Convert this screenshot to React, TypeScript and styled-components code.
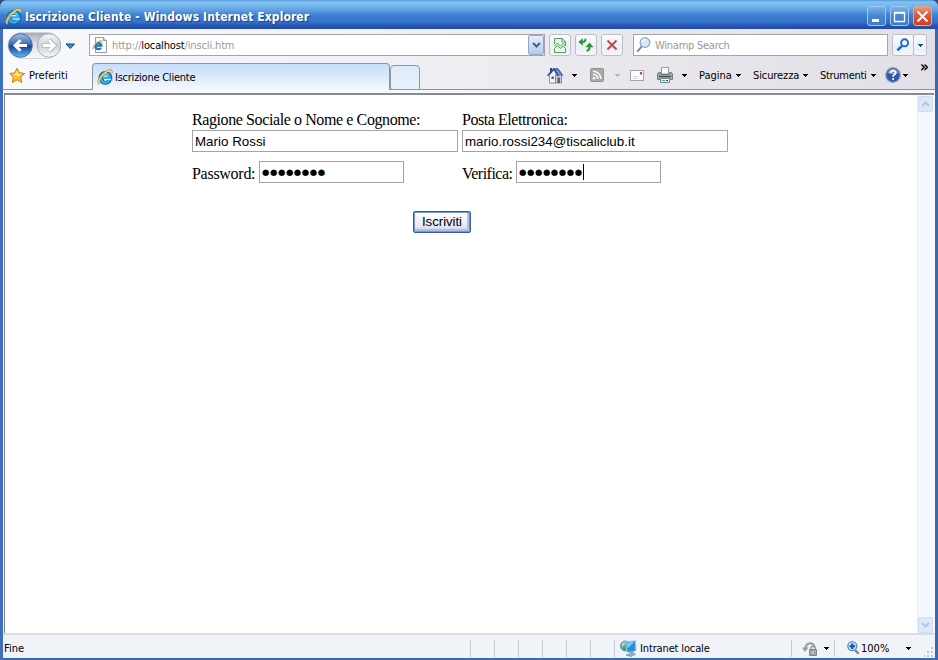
import React from "react";
import styled, {createGlobalStyle} from "styled-components";

const GlobalStyle = createGlobalStyle`
  * {
    box-sizing: border-box;
    margin: 0;
    padding: 0;
  }

  body {
    width: 938px;
    height: 660px;
    overflow: hidden;
    background: #3a4a6c;
  }

  svg {
    display: block;
    flex: none;
  }
`

const Window = styled.div`
  width: 938px;
  height: 660px;
  display: flex;
  flex-direction: column;
  overflow: hidden;
  border-radius: 7px 7px 0 0;
  background: #4d7fd0;
  font-family: "DejaVu Sans Condensed", "DejaVu Sans", sans-serif;
  font-stretch: condensed;
  font-size: 11px;
  color: #000;
`

const TitleBar = styled.header`
  height: 29px;
  flex: none;
  display: flex;
  align-items: center;
  padding: 3px 6px 0 5px;
  background: linear-gradient(#5b95d8 0, #7fc4f2 2px, #76b9ed 5px, #5a9de0 11px, #3d7fd2 15px, #3474cb 22px, #2959b8 25px, #2149a5 29px);
`

const WindowTitle = styled.h1`
  width: 300px;
  margin: 1px 0 0 3px;
  font-size: 12px;
  line-height: 16px;
  font-weight: 700;
  letter-spacing: 0.09px;
  white-space: nowrap;
  color: #fff;
  text-shadow: 1px 1px 1px #17408f;
`

const WindowButtons = styled.div`
  display: flex;
  gap: 4px;
  margin-left: auto;
`

const WindowButton = styled.button<{ $close?: boolean }>`
  width: 19px;
  height: 20px;
  display: flex;
  align-items: center;
  justify-content: center;
  border: 1px solid ${({$close}) => $close ? '#e9a396' : '#a5c8ef'};
  border-radius: 3px;
  background: ${({$close}) => $close
      ? 'linear-gradient(#ee9a82, #d9583c 45%, #cd4020)'
      : 'linear-gradient(#79b2e7, #4587d4 50%, #3d7ccd)'};
`

const Frame = styled.div`
  flex: 1;
  min-height: 0;
  display: flex;
  flex-direction: column;
  border: solid #3a68b9;
  border-width: 0 3px 2px 3px;
  border-left-color: #3f6fbd;
  background: #f6f8fc;
`

const Chrome = styled.div`
  flex: none;
  height: 61px;
  background: linear-gradient(90deg, #f8f9fd 0, #f1f2f7 35%, #e9e8ed 65%, #e2e0e6 100%);
`

const AddressRow = styled.div`
  height: 33px;
  display: flex;
  align-items: center;
  padding: 0 0 1px 3px;
`

const HistoryArrow = styled.div`
  width: 11px;
  margin: 2px 13px 0 4px;
`

const AddressBox = styled.div`
  width: 456px;
  height: 22px;
  display: flex;
  align-items: center;
  padding-left: 2px;
  border: 1px solid #a3a5ab;
  background: #fff;
`

const Url = styled.span`
  width: 130px;
  margin: 1px 0 0 5px;
  letter-spacing: -0.14px;
  white-space: nowrap;
  color: #999;

  b {
    font-weight: 400;
    color: #000;
  }
`

const DropButton = styled.button`
  width: 16px;
  height: 20px;
  margin-left: auto;
  display: flex;
  align-items: center;
  justify-content: center;
  border: 1px solid #90a9c9;
  border-radius: 2px;
  background: linear-gradient(#e4effc, #b7cdea);
`

const ToolButton = styled.button<{ $w?: number, $ml?: number }>`
  width: ${({$w}) => $w || 22}px;
  height: 22px;
  margin-left: ${({$ml}) => $ml ?? 4}px;
  display: flex;
  align-items: center;
  justify-content: center;
  border: 1px solid #bbbfca;
  border-radius: 3px;
  background: linear-gradient(#fbfcfd, #eaf0f6 60%, #f3f6fa);
`

const SearchBox = styled.div`
  width: 255px;
  height: 22px;
  margin-left: 10px;
  display: flex;
  align-items: center;
  gap: 4px;
  padding-left: 2px;
  border: 1px solid #a3a5ab;
  background: #fff;
  color: #999;
  letter-spacing: -0.25px;

  span {
    margin-top: 1px;
  }
`

const TabRow = styled.div`
  height: 28px;
  display: flex;
  align-items: flex-end;
  border-bottom: 1px solid #8d9299;
`

const Favorites = styled.div`
  width: 89px;
  height: 28px;
  display: flex;
  align-items: center;
  gap: 3px;
  padding-left: 6px;
`

const Tab = styled.div`
  width: 298px;
  height: 27px;
  margin-bottom: -1px;
  display: flex;
  align-items: center;
  gap: 2px;
  padding-left: 4px;
  border: 1px solid #8d959f;
  border-bottom: 0;
  border-radius: 4px 4px 0 0;
  background: linear-gradient(#c6dffa, #dbe9fb 50%, #f6f9fe);
  letter-spacing: -0.24px;
`

const NewTab = styled.div`
  width: 30px;
  height: 25px;
  margin-bottom: -1px;
  border: 1px solid #8d959f;
  border-radius: 4px 4px 0 3px;
  background: linear-gradient(#dcebfb, #e8f2fc);
`

const CommandBar = styled.nav`
  flex: 1;
  height: 28px;
  display: flex;
  align-items: center;
  padding-left: 127px;
`

const Slot = styled.span<{ $w: number, $spacing?: number }>`
  flex: none;
  width: ${({$w}) => $w}px;
  letter-spacing: ${({$spacing}) => $spacing || 0}px;
  white-space: nowrap;
`

const Overflow = styled.span`
  align-self: flex-start;
  margin-top: -2px;
  font-size: 15px;
  line-height: 16px;
  font-weight: 700;
`

const Viewport = styled.main`
  flex: 1;
  min-height: 0;
  display: flex;
  margin: 3px 1px 0 1px;
  border-top: 2px solid #868b94;
  border-left: 1px solid #7a8495;
  background: #fff;
`

const Page = styled.div`
  flex: 1;
  padding: 15px 0 0 187px;
  font-family: "Liberation Serif", serif;
  font-size: 16px;
`

const FormGrid = styled.form`
  display: grid;
  grid-template-columns: 266px 266px;
  column-gap: 4px;
`

const FieldLabel = styled.label<{ $spacing: number }>`
  height: 20px;
  line-height: 20px;
  letter-spacing: ${({$spacing}) => $spacing}px;
  white-space: nowrap;
`

const InlineField = styled.div`
  height: 31px;
  display: flex;
  align-items: flex-end;

  label {
    height: 19px;
    line-height: 20px;
  }
`

const Field = styled.div<{ $w: number }>`
  width: ${({$w}) => $w}px;
  height: 22px;
  display: flex;
  align-items: center;
  padding-left: 2px;
  border: 1px solid #a3a3ad;
  font: 13.33px "Liberation Sans", sans-serif;
  letter-spacing: 0.02px;
  white-space: nowrap;
`

const Dots = styled.span`
  width: 64px;
  font: 8.5px/14px "DejaVu Sans", sans-serif;
  letter-spacing: 0.55px;
`

const Caret = styled.i`
  width: 1px;
  height: 16px;
  background: #000;
`

const SubmitButton = styled.button`
  width: 58px;
  height: 22px;
  margin: 28px 0 0 221px;
  border: 1px solid #3c5b93;
  border-radius: 2px;
  box-shadow: inset 0 0 0 1px #7298d4, inset -1px -1px 0 2px #a9c1e8;
  background: linear-gradient(#fff, #eceef6 60%, #c9d2e8);
  font: 13.33px/18px "Liberation Sans", sans-serif;
  letter-spacing: -0.08px;
`

const ScrollBar = styled.div`
  width: 17px;
  display: flex;
  flex-direction: column;
  justify-content: space-between;
  padding-top: 1px;
  border-left: 1px solid #e7edf7;
  background: #f5f9fe;
`

const ScrollButton = styled.button`
  width: 15px;
  height: 16px;
  display: flex;
  align-items: center;
  justify-content: center;
  border: 1px solid #ccdef4;
  border-radius: 2px;
  background: #dce9fa;
`

const StatusBar = styled.footer`
  flex: none;
  height: 25px;
  display: flex;
  align-items: center;
  padding: 3px 1px 0;
  border-top: 2px solid #d9dde2;
  background: #f0f3f8;
`

const StatusText = styled.span`
  width: 466px;
`

const Pane = styled.div<{ $w: number, $pad?: number }>`
  flex: none;
  width: ${({$w}) => $w}px;
  height: 17px;
  display: flex;
  align-items: center;
  padding-left: ${({$pad}) => $pad || 0}px;
  border-left: 1px solid #c9cdd3;
`

const Grip = styled.svg`
  align-self: flex-end;
  margin-left: auto;
`

const IELogo: React.FC<{ size?: number }> = ({size = 16}) => (
    <svg width={size} height={size} viewBox="0 0 16 16" fill="none">
        <path d="M13 10.6A4.9 4.9 0 1 1 13.3 8.8H5.6" stroke="#1766a8" strokeWidth="4"/>
        <path d="M12.6 10.6A4.6 4.6 0 1 1 12.9 8.8H5.6" stroke="#37a9e6" strokeWidth="2.5"/>
        <path d="M6.3 7.2h4.6M7 10.5h7" stroke="#eaf6fd" strokeWidth="1.1"/>
        <path d="M5 6.2A4.4 4.4 0 0 1 11 5.6" stroke="#a5e0fa"/>
        <path d="M2.4 14.9C-.6 13.4 3 6.7 8 3.3 12.1.5 15.6.1 14.7 4" stroke="#b98a2a" strokeWidth="1.7"/>
        <path d="M2.2 14.5C.5 12.8 4 6.9 8.4 3.6 12 1.1 14.8.7 14.5 3.6" stroke="#ffdc5e" strokeWidth="1.2"/>
    </svg>
)

const PageIcon = () => (
    <svg width="15" height="16" viewBox="0 0 15 16">
        <path d="M3.5.5h8l3 3v12h-11z" fill="#fafbfc" stroke="#9a9b9e"/>
        <path d="M11.5.5v3h3" fill="#ddd" stroke="#9a9b9e"/>
        <path d="M8.9 10.8A3.1 3.1 0 1 1 9.4 8.7H3.5" fill="none" stroke="#1674b8" strokeWidth="2.2"/>
        <path d="M1.4 12.7C0 11.2 3 6.8 6 5 8.6 3.4 10.6 3.2 10 5.6" fill="none" stroke="#e0a62c" strokeWidth="1.2"/>
    </svg>
)

const NavButtons = () => (
    <svg width="55" height="29" viewBox="0 0 55 29">
        <defs>
            <linearGradient id="shell" x1="0" y1="0" x2="0" y2="1">
                <stop offset="0" stopColor="#a6a9b0"/>
                <stop offset=".45" stopColor="#e0e2e7"/>
                <stop offset="1" stopColor="#f8f9fb"/>
            </linearGradient>
            <linearGradient id="back" x1="0" y1="0" x2="0" y2="1">
                <stop offset="0" stopColor="#a9c2e4"/>
                <stop offset=".42" stopColor="#3f72bd"/>
                <stop offset=".55" stopColor="#164899"/>
                <stop offset="1" stopColor="#5dbdf4"/>
            </linearGradient>
            <linearGradient id="forward" x1="0" y1="0" x2="0" y2="1">
                <stop offset="0" stopColor="#f8f9fa"/>
                <stop offset=".5" stopColor="#ced2da"/>
                <stop offset="1" stopColor="#f7f8fa"/>
            </linearGradient>
        </defs>
        <path d="M15 1.5h26a13 13 0 0 1 0 26H15a13 13 0 0 1 0-26z" fill="url(#shell)" stroke="#d1d4da"/>
        <circle cx="14.5" cy="14.5" r="11.8" fill="url(#back)" stroke="#4b6fa8"/>
        <path d="M9 14.5h12M14.5 9.2l-5.4 5.3 5.4 5.3" fill="none" stroke="#fff" strokeWidth="3"/>
        <circle cx="43" cy="14.5" r="11.8" fill="url(#forward)" stroke="#a4aab4"/>
        <path d="M36.5 14.5H48M43 9l5.5 5.5L43 20" fill="none" stroke="#a7adb7" strokeWidth="4.2"/>
        <path d="M37 14.5h11M43 9.2l5.3 5.3-5.3 5.3" fill="none" stroke="#fff" strokeWidth="2.8"/>
    </svg>
)

const StarIcon = () => (
    <svg width="17" height="17" viewBox="0 0 17 17">
        <path d="m8 1.2 2.2 4.6 5.5.6-4 3.7 1.2 5.4-4.8-2.7-4.8 2.8 1-5.5L.8 6.5l5.1-.7z" fill="#fdc02e" stroke="#c58818"/>
        <path d="m8 3.5 1.3 3.3 3.4.4-3 2.1-5.7-2.1 2.7-.5z" fill="#ffe68a"/>
    </svg>
)

const Triangle: React.FC<{ color?: string }> = ({color = '#000'}) => (
    <svg width="5" height="3" viewBox="0 0 5 3" shapeRendering="crispEdges">
        <path d="M0 0h5v1H4v1H3v1H2V2H1V1H0z" fill={color}/>
    </svg>
)

const Chevron: React.FC<{ up?: boolean, color?: string, width?: number }> = ({up, color = '#3d5f90', width = 2}) => (
    <svg width="9" height="6" viewBox="0 0 9 6">
        <path d={up ? 'm1 5 3.5-3.5L8 5' : 'm1 1 3.5 3.5L8 1'} fill="none" stroke={color} strokeWidth={width}/>
    </svg>
)

const CompatIcon = () => (
    <svg width="12" height="15" viewBox="0 0 12 15" fill="none" stroke="#4fa054">
        <path d="M.5 6V.5h7.8l3.2 3.2V8M8 .5V4h3.5" fill="#effaf0"/>
        <path d="m.5 8 2.8-3 3 3 2.8-2.5L11.5 8M.5 10.5l2.8-3 3 3L9 8l2.5 2.5v4H.5z"/>
    </svg>
)

const RefreshIcon = () => (
    <svg width="16" height="14" viewBox="0 0 16 14" fill="none" stroke="#2f9433" strokeWidth="2">
        <path d="M7.5.8C7.6 3.2 6.7 4 4 4"/>
        <path d="M.3 4 4.8.2v7.6z" fill="#2f9433" stroke="none"/>
        <path d="M11.5 7v2.5c0 2-1 3-3 3.2"/>
        <path d="m11.5 4.5 4 4.8h-8z" fill="#2f9433" stroke="none"/>
    </svg>
)

const SearchGlass: React.FC<{ blue?: boolean }> = ({blue}) => blue ? (
    <svg width="14" height="14" viewBox="0 0 14 14" fill="none" stroke="#2467c8">
        <circle cx="8.6" cy="4.8" r="3.5" strokeWidth="1.9" fill="#edf5fd"/>
        <path d="m6 7.8-4.6 4.6" strokeWidth="2.6"/>
    </svg>
) : (
    <svg width="15" height="16" viewBox="0 0 15 16" fill="none">
        <path d="m5.8 9.3-4.6 5.4" stroke="#8b8582" strokeWidth="2"/>
        <circle cx="9" cy="5.5" r="4.8" fill="#d7e8fa" stroke="#8ea4bd" strokeWidth="1.3"/>
        <path d="M6 5a3 3 0 0 1 3-2.5" stroke="#fff"/>
    </svg>
)

const HomeIcon = () => (
    <svg width="17" height="17" viewBox="0 0 17 17">
        <path d="M2.5 8v8H9V4.5L7 3z" fill="#f3f6fd" stroke="#8592b5"/>
        <path d="M8.5 8h6v8h-6z" fill="#c3cde4" stroke="#7d8bb0"/>
        <path d="M3 1h2.2v4L3 7z" fill="#26438c"/>
        <path d="m6.5 2.5 4-1L16 8.5l-5 .5z" fill="#6f8cc9"/>
        <path d="M.5 8.8 6.8 2l4.4 7" fill="none" stroke="#2b4790" strokeWidth="1.4"/>
        <path d="m7 2 4-.3 5 6.8" fill="none" stroke="#2b4790"/>
        <path d="M4.5 9.5h2.3V12H4.5z" fill="#3d5d9f"/>
        <path d="M10.5 10.5h2.3V16h-2.3z" fill="#6b5043"/>
    </svg>
)

const FeedIcon = () => (
    <svg width="14" height="14" viewBox="0 0 14 14" fill="none">
        <rect x=".5" y=".5" width="13" height="13" rx="1.5" fill="#aaa" stroke="#929292"/>
        <circle cx="4" cy="10.2" r="1.3" fill="#fff"/>
        <path d="M3 6.2a4.8 4.8 0 0 1 4.8 4.8M3 3.2a7.8 7.8 0 0 1 7.8 7.8" stroke="#fff" strokeWidth="1.5"/>
    </svg>
)

const MailIcon = () => (
    <svg width="14" height="11" viewBox="0 0 14 11">
        <rect x=".5" y=".5" width="13" height="10" fill="#fcfcfd" stroke="#a1a4aa"/>
        <path d="M10 2h2v2.4h-2z" fill="#d53b35"/>
        <path d="M3 6.5h5M3 8.5h4" stroke="#d2d7df"/>
    </svg>
)

const PrinterIcon = () => (
    <svg width="16" height="16" viewBox="0 0 16 16">
        <path d="M4.5.5h7V7h-7z" fill="#fff" stroke="#9299a1"/>
        <path d="M1.5 5.5h2v2h9v-2h2l1 1.5v5.5H.5V7z" fill="#a3a7ac" stroke="#777c82"/>
        <path d="M2 9.5h12" stroke="#4b5055" strokeWidth="1.4"/>
        <path d="M3.5 11.5h9v4h-9z" fill="#eef5fc" stroke="#7f848a"/>
        <path d="M5 13.5h3" stroke="#3ca1d8"/>
        <path d="M9 13.5h2" stroke="#444"/>
    </svg>
)

const HelpIcon = () => (
    <svg width="16" height="16" viewBox="0 0 16 16">
        <circle cx="8" cy="8" r="7.3" fill="#3057ad" stroke="#909ebc" strokeWidth="1.3"/>
        <path d="M2.5 6a5.8 5.8 0 0 1 11 0c-3 1.8-8 1.8-11 0" fill="#7292d2"/>
        <path d="M5.6 6.1c0-3.4 5-3.2 5-.4 0 1.8-2.5 1.8-2.5 4" fill="none" stroke="#fff" strokeWidth="1.8"/>
        <circle cx="8.1" cy="12" r="1.1" fill="#fff"/>
    </svg>
)

const IntranetIcon = () => (
    <svg width="17" height="17" viewBox="0 0 17 17">
        <circle cx="5.5" cy="6" r="5" fill="#4aa352" stroke="#6b9299"/>
        <path d="M1.5 4.5c2-3 4-3.5 5-2.5L4 5 2.5 8z" fill="#a5dcea"/>
        <path d="M4.5 2 15.5.8l.5 10-8.5 1.8z" fill="#2f8bd8" stroke="#a9cde8"/>
        <path d="m5.6 2.8 9-1L7.8 8.5z" fill="#7cc8f5"/>
        <path d="m10 12.3 3-.6.5 1.8 2 .7-4.5 2.3-5-1.4 4-1.1z" fill="#8fb0d6" stroke="#5d7fa6" strokeWidth=".6"/>
    </svg>
)

const PrivacyIcon = () => (
    <svg width="16" height="15" viewBox="0 0 16 15" fill="none">
        <path d="M3.5 7C4.5 1 11.5.8 12.5 6" stroke="#a0a0a0" strokeWidth="2.2"/>
        <path d="M0 6.5h6.5L3 11z" fill="#9a9a9a"/>
        <path d="M8.8 9V7.5a2.2 2.2 0 0 1 4.4 0V9" stroke="#8e8e8e" strokeWidth="1.3"/>
        <path d="M7.5 8.5h7v6h-7z" fill="#a5a5a3" stroke="#858585"/>
        <path d="M11 10.5v2" stroke="#eee"/>
    </svg>
)

const ZoomIcon = () => (
    <svg width="13" height="14" viewBox="0 0 13 14" fill="none">
        <path d="m7.8 8.8 3.8 4" stroke="#9a7a63" strokeWidth="2.3"/>
        <circle cx="5.3" cy="5.2" r="4.5" fill="#c5e0f8" stroke="#5d8fcf" strokeWidth="1.3"/>
        <path d="M5.3 2.5v5.4M2.6 5.2H8" stroke="#164e9b" strokeWidth="2"/>
    </svg>
)

const App: React.FC = () => {
    return (
        <Window>
            <GlobalStyle/>
            <TitleBar>
                <IELogo size={17}/>
                <WindowTitle>Iscrizione Cliente - Windows Internet Explorer</WindowTitle>
                <WindowButtons>
                    <WindowButton>
                        <svg width="13" height="13"><path d="M2 9h7v3H2z" fill="#fff"/></svg>
                    </WindowButton>
                    <WindowButton>
                        <svg width="13" height="13"><path d="M1.5 2.5h10v9h-10zM1 3h11" fill="none" stroke="#fff" strokeWidth="1.3"/></svg>
                    </WindowButton>
                    <WindowButton $close>
                        <svg width="13" height="13"><path d="m1.5 1.5 10 10m0-10-10 10" stroke="#fff" strokeWidth="2.1"/></svg>
                    </WindowButton>
                </WindowButtons>
            </TitleBar>
            <Frame>
                <Chrome>
                    <AddressRow>
                        <NavButtons/>
                        <HistoryArrow>
                            <svg width="11" height="7"><path d="M1 1h8.5L5.3 5.5z" fill="#2c9bc4" stroke="#173f75"/></svg>
                        </HistoryArrow>
                        <AddressBox>
                            <PageIcon/>
                            <Url>http://<b>localhost</b>/inscli.htm</Url>
                            <DropButton><Chevron/></DropButton>
                        </AddressBox>
                        <ToolButton><CompatIcon/></ToolButton>
                        <ToolButton><RefreshIcon/></ToolButton>
                        <ToolButton>
                            <svg width="12" height="12"><path d="m1.5 1.5 9 9m0-9-9 9" stroke="#c04a4a" strokeWidth="2"/></svg>
                        </ToolButton>
                        <SearchBox>
                            <SearchGlass/>
                            <span>Winamp Search</span>
                        </SearchBox>
                        <ToolButton><SearchGlass blue/></ToolButton>
                        <ToolButton $w={14} $ml={-1}><Triangle color="#1c4e7e"/></ToolButton>
                    </AddressRow>
                    <TabRow>
                        <Favorites>
                            <StarIcon/>
                            <span>Preferiti</span>
                        </Favorites>
                        <Tab>
                            <IELogo/>
                            <span>Iscrizione Cliente</span>
                        </Tab>
                        <NewTab/>
                        <CommandBar>
                            <Slot $w={25}><HomeIcon/></Slot>
                            <Slot $w={18}><Triangle/></Slot>
                            <Slot $w={25}><FeedIcon/></Slot>
                            <Slot $w={15}><Triangle color="#b7b7bb"/></Slot>
                            <Slot $w={27}><MailIcon/></Slot>
                            <Slot $w={25}><PrinterIcon/></Slot>
                            <Slot $w={17}><Triangle/></Slot>
                            <Slot $w={37}>Pagina</Slot>
                            <Slot $w={17}><Triangle/></Slot>
                            <Slot $w={50} $spacing={-0.1}>Sicurezza</Slot>
                            <Slot $w={17}><Triangle/></Slot>
                            <Slot $w={51} $spacing={-0.3}>Strumenti</Slot>
                            <Slot $w={14}><Triangle/></Slot>
                            <Slot $w={18}><HelpIcon/></Slot>
                            <Slot $w={17}><Triangle/></Slot>
                            <Overflow>»</Overflow>
                        </CommandBar>
                    </TabRow>
                </Chrome>
                <Viewport>
                    <Page>
                        <FormGrid>
                            <FieldLabel $spacing={-0.4}>Ragione Sociale o Nome e Cognome:</FieldLabel>
                            <FieldLabel $spacing={-0.44}>Posta Elettronica:</FieldLabel>
                            <Field $w={266}>Mario Rossi</Field>
                            <Field $w={266}>mario.rossi234@tiscaliclub.it</Field>
                            <InlineField>
                                <Slot as="label" $w={67} $spacing={-0.28}>Password:</Slot>
                                <Field $w={145}><Dots>●●●●●●●●</Dots></Field>
                            </InlineField>
                            <InlineField>
                                <Slot as="label" $w={54} $spacing={-0.52}>Verifica:</Slot>
                                <Field $w={145}><Dots>●●●●●●●●</Dots><Caret/></Field>
                            </InlineField>
                        </FormGrid>
                        <SubmitButton>Iscriviti</SubmitButton>
                    </Page>
                    <ScrollBar>
                        <ScrollButton><Chevron up color="#b5c6de"/></ScrollButton>
                        <ScrollButton><Chevron color="#b5c6de"/></ScrollButton>
                    </ScrollBar>
                </Viewport>
                <StatusBar>
                    <StatusText>Fine</StatusText>
                    <Pane $w={24}/>
                    <Pane $w={24}/>
                    <Pane $w={24}/>
                    <Pane $w={24}/>
                    <Pane $w={24}/>
                    <Pane $w={24}/>
                    <Pane $w={177} $pad={5}>
                        <IntranetIcon/>
                        <Slot $w={90} $spacing={-0.14}>&nbsp;Intranet locale</Slot>
                    </Pane>
                    <Pane $w={43} $pad={10}>
                        <Slot $w={22}><PrivacyIcon/></Slot>
                        <Triangle/>
                    </Pane>
                    <Pane $w={90} $pad={12}>
                        <Slot $w={14}><ZoomIcon/></Slot>
                        <Slot $w={45}>100%</Slot>
                        <Triangle/>
                    </Pane>
                    <Grip width="10" height="11" fill="#bfc3ca">
                        <path d="M7 0h2v2H7zM7 4h2v2H7zM7 8h2v2H7zM3 4h2v2H3zM3 8h2v2H3zM0 8h1v2H0z"/>
                    </Grip>
                </StatusBar>
            </Frame>
        </Window>
    )
}

export default App
